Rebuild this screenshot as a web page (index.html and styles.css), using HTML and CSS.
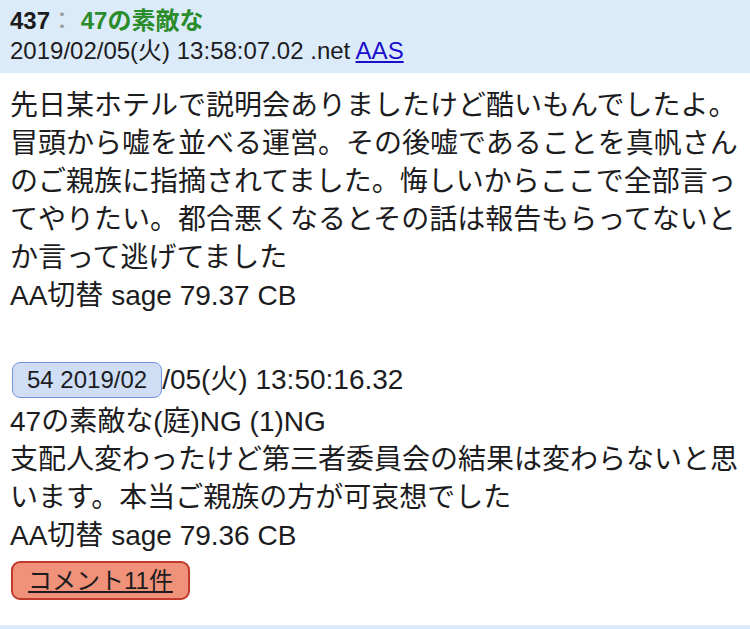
FILE: index.html
```html
<!DOCTYPE html>
<html lang="ja">
<head>
    <meta charset="UTF-8">
    <meta name="viewport" content="width=device-width, initial-scale=1.0">
    <title>437</title>
    <link rel="stylesheet" href="styles.css">
</head>
<body>
    <div class="post">
        <div class="post-head">
            <div class="head-line"><span class="num">437</span><span class="sep">：</span> <span class="name">47の素敵な</span></div>
            <div class="head-line">2019/02/05(火) 13:58:07.02 .net <a href="#">AAS</a></div>
        </div>
        <div class="post-body">
            <p class="msg">先日某ホテルで説明会ありましたけど酷いもんでしたよ。冒頭から嘘を並べる運営。その後嘘であることを真帆さんのご親族に指摘されてました。悔しいからここで全部言ってやりたい。都合悪くなるとその話は報告もらってないとか言って逃げてました</p>
            <p class="msg">AA切替 sage 79.37 CB</p>

            <div class="reply">
                <div class="reply-head"><span class="anchor">54 2019/02</span>/05(火) 13:50:16.32</div>
                <p class="msg">47の素敵な(庭)NG (1)NG</p>
                <p class="msg">支配人変わったけど第三者委員会の結果は変わらないと思います。本当ご親族の方が可哀想でした</p>
                <p class="msg">AA切替 sage 79.36 CB</p>
                <a class="comments" href="#">コメント11件</a>
            </div>
        </div>
    </div>
    <div class="post-head next"></div>
</body>
</html>
```

FILE: styles.css
```css
body {
    margin: 0;
    background: #fff;
    color: #1c1c1e;
    font-family: "Liberation Sans", "Noto Sans CJK JP", sans-serif;
}
.post-head {
    background: #dcebfa;
    padding: 6px 10px 7px 10px;
    font-size: 24px;
    line-height: 30px;
}
.head-line {
    white-space: nowrap;
}
.num {
    font-weight: bold;
}
.sep {
    color: #9a9a9a;
}
.name {
    color: #2a8c2a;
    font-weight: bold;
}
.post-head a {
    color: #1a0dcc;
}
.post-body {
    padding: 14px 10px 25px 10px;
    font-size: 28px;
    line-height: 38px;
}
.msg {
    margin: 0;
}
.reply {
    margin-top: 41px;
}
.reply-head {
    display: flex;
    align-items: center;
    height: 47px;
}
.anchor {
    display: inline-block;
    background: #cfdef4;
    border: 1.5px solid #7394d8;
    border-radius: 8px;
    padding: 0 14px;
    font-size: 24px;
    line-height: 34px;
    margin-left: 2px;
}
.comments {
    display: inline-block;
    margin-top: 6px;
    margin-left: 1px;
    background: #ef9279;
    border: 2px solid #c23a2c;
    border-radius: 9px;
    padding: 0 15px;
    font-size: 24px;
    line-height: 35px;
    color: #1c1c1e;
}
.next {
    height: 20px;
    padding: 0;
}
```
